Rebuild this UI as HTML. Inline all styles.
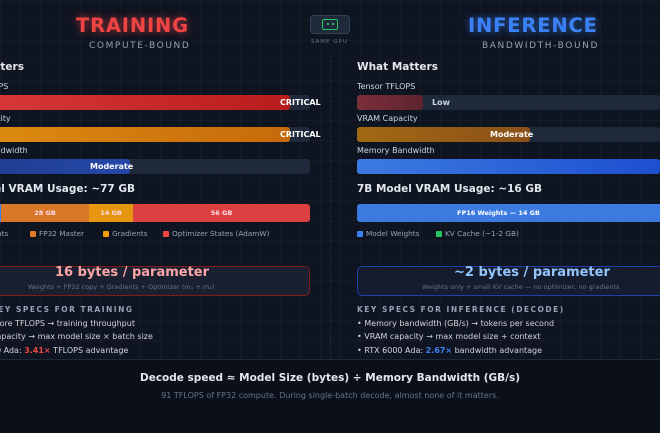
<!DOCTYPE html>
<html><head><meta charset="utf-8"><style>
*{margin:0;padding:0;box-sizing:border-box}
html,body{width:660px;height:433px;overflow:hidden}
body{background:#0f1421;font-family:"DejaVu Sans","Liberation Sans",sans-serif;color:#e2e8f0;position:relative}
.bg{position:absolute;inset:0;background-image:linear-gradient(rgba(255,255,255,.025) 1px,transparent 1px),linear-gradient(90deg,rgba(255,255,255,.025) 1px,transparent 1px);background-size:20px 20px}
.a{position:absolute;white-space:nowrap}
.h1{font-weight:bold;font-size:19.5px;letter-spacing:0.8px}
.sub{font-size:9px;letter-spacing:1.6px;color:#94a3b8}
.sec{font-weight:bold;font-size:10.5px;color:#e5e7eb}
.lbl{font-size:8px;color:#cbd5e1}
.track{position:absolute;height:15px;background:#1e293b;border-radius:3px}
.fill{position:absolute;top:0;left:0;height:15px;border-radius:3px}
.bt{position:absolute;font-size:8px;font-weight:bold;color:#fff;top:3px}
.leg{font-size:7.3px;color:#94a3b8}
.sq{display:inline-block;width:6px;height:6px;border-radius:1px;vertical-align:-1px;margin-right:3px}
.bl{font-size:8px;color:#d1d5db}
.kh{font-size:7.5px;font-weight:bold;letter-spacing:1.5px;color:#94a3b8}
#wrap{position:absolute;left:0;top:0;width:660px;height:433px;overflow:hidden}
</style></head><body><div id="wrap">
<div class="bg"></div>
<div class="a" style="left:0;top:359px;width:660px;height:74px;background:#0b0f19;border-top:1px solid #1f2937"></div>
<div class="a" style="left:330px;top:55px;height:304px;border-left:1px dashed #1f2937"></div>

<div class="a h1" style="left:76px;top:14px;color:#ef4444;text-shadow:0 0 8px rgba(239,68,68,.7)">TRAINING</div>
<div class="a sub" style="left:89px;top:41px">COMPUTE-BOUND</div>
<div class="a h1" style="left:468px;top:14px;color:#3b82f6;text-shadow:0 0 8px rgba(59,130,246,.7)">INFERENCE</div>
<div class="a sub" style="left:482px;top:41px">BANDWIDTH-BOUND</div>

<div class="a" style="left:310px;top:15px;width:40px;height:19px;border:1px solid #334155;border-radius:4px;background:#1e293b"></div>
<div class="a" style="left:322px;top:19px;width:16px;height:11px;border:1.5px solid #22c55e;border-radius:2px"></div>
<div class="a" style="left:327px;top:23px;width:2px;height:2px;background:#22c55e"></div>
<div class="a" style="left:332px;top:23px;width:2px;height:2px;background:#22c55e"></div>
<div class="a" style="left:311px;top:39px;font-size:5.5px;letter-spacing:1px;color:#64748b">SAME GPU</div>

<!-- Left -->
<div class="a sec" style="left:-57px;top:61px">What Matters</div>
<div class="a lbl" style="left:-50px;top:82px">Tensor TFLOPS</div>
<div class="track" style="left:-60px;top:95px;width:370px"><div class="fill" style="width:350px;background:linear-gradient(90deg,#dc3c3c,#b91c1c)"></div></div>
<div class="bt" style="left:280px;top:98px">CRITICAL</div>
<div class="a lbl" style="left:-50px;top:114px">VRAM Capacity</div>
<div class="track" style="left:-60px;top:127px;width:370px"><div class="fill" style="width:350px;background:linear-gradient(90deg,#e09010,#c66a0c)"></div></div>
<div class="bt" style="left:280px;top:130px">CRITICAL</div>
<div class="a lbl" style="left:-50px;top:146px">Memory Bandwidth</div>
<div class="track" style="left:-60px;top:159px;width:370px"><div class="fill" style="width:190px;background:linear-gradient(90deg,#1e3a8a,#2548a8)"></div></div>
<div class="bt" style="left:90px;top:162px">Moderate</div>
<div class="a" style="left:-50px;top:183px;font-size:10.5px;font-weight:bold">7B Model VRAM Usage: ~77 GB</div>
<div class="a" style="left:-60px;top:204px;width:370px;height:18px;border-radius:3px;overflow:hidden;display:flex;font-size:6.5px;font-weight:bold;color:#fde;line-height:18px;text-align:center">
<div style="width:61px;background:#3b82f6"></div><div style="width:88px;background:#d97726">28 GB</div><div style="width:44px;background:#e6960f">14 GB</div><div style="flex:1;background:#dc4040">56 GB</div></div>
<div class="a leg" style="left:-21px;top:229px">Weights</div>
<div class="a leg" style="left:30px;top:229px"><span class="sq" style="background:#e07b24"></span>FP32 Master</div>
<div class="a leg" style="left:103px;top:229px"><span class="sq" style="background:#f59e0b"></span>Gradients</div>
<div class="a leg" style="left:163px;top:229px"><span class="sq" style="background:#ef4444"></span>Optimizer States (AdamW)</div>
<div class="a" style="left:-60px;top:266px;width:370px;height:30px;border:1px solid #7f1d1d;border-radius:5px;background:#1a2030"></div>
<div class="a" style="left:55px;top:265px;font-size:13px;font-weight:bold;color:#fca5a5">16 bytes / parameter</div>
<div class="a" style="left:28px;top:283px;font-size:6.5px;color:#64748b">Weights + FP32 copy + Gradients + Optimizer (m₁ + m₂)</div>
<div class="a kh" style="left:-9px;top:305px">KEY SPECS FOR TRAINING</div>
<div class="a bl" style="left:-6px;top:319px">Core TFLOPS → training throughput</div>
<div class="a bl" style="left:-8px;top:332px">capacity → max model size × batch size</div>
<div class="a bl" style="left:-4px;top:346px">0 Ada: <b style="color:#ef4444">3.41×</b> TFLOPS advantage</div>

<!-- Right -->
<div class="a sec" style="left:357px;top:61px">What Matters</div>
<div class="a lbl" style="left:357px;top:82px">Tensor TFLOPS</div>
<div class="track" style="left:357px;top:95px;width:303px"><div class="fill" style="width:66px;background:linear-gradient(90deg,#7a2e3a,#5e2430)"></div></div>
<div class="bt" style="left:432px;top:98px;color:#cbd5e1">Low</div>
<div class="a lbl" style="left:357px;top:114px">VRAM Capacity</div>
<div class="track" style="left:357px;top:127px;width:303px"><div class="fill" style="width:173px;background:linear-gradient(90deg,#a06a14,#8a5018)"></div></div>
<div class="bt" style="left:490px;top:130px">Moderate</div>
<div class="a lbl" style="left:357px;top:146px">Memory Bandwidth</div>
<div class="track" style="left:357px;top:159px;width:303px"><div class="fill" style="width:303px;background:linear-gradient(90deg,#3b7be0,#1d4fd0)"></div></div>
<div class="a" style="left:357px;top:183px;font-size:10.5px;font-weight:bold">7B Model VRAM Usage: ~16 GB</div>
<div class="a" style="left:357px;top:204px;width:303px;height:18px;border-radius:3px 0 0 3px;background:#3b7be0;font-size:6.5px;font-weight:bold;line-height:18px;color:#fff"><span style="margin-left:100px">FP16 Weights — 14 GB</span></div>
<div class="a leg" style="left:357px;top:229px"><span class="sq" style="background:#3b82f6"></span>Model Weights</div>
<div class="a leg" style="left:436px;top:229px"><span class="sq" style="background:#22c55e"></span>KV Cache (~1-2 GB)</div>
<div class="a" style="left:357px;top:266px;width:320px;height:30px;border:1px solid #1e40af;border-radius:5px;background:#141c2e"></div>
<div class="a" style="left:454px;top:265px;font-size:13px;font-weight:bold;color:#93c5fd">~2 bytes / parameter</div>
<div class="a" style="left:422px;top:283px;font-size:6.5px;color:#64748b">Weights only + small KV cache — no optimizer, no gradients</div>
<div class="a kh" style="left:357px;top:305px">KEY SPECS FOR INFERENCE (DECODE)</div>
<div class="a bl" style="left:357px;top:319px">• Memory bandwidth (GB/s) → tokens per second</div>
<div class="a bl" style="left:357px;top:332px">• VRAM capacity → max model size + context</div>
<div class="a bl" style="left:357px;top:346px">• RTX 6000 Ada: <b style="color:#3b82f6">2.67×</b> bandwidth advantage</div>

<div class="a" style="left:0;width:660px;top:372px;text-align:center;font-size:10.5px;font-weight:bold;color:#e5e7eb">Decode speed ≈ Model Size (bytes) ÷ Memory Bandwidth (GB/s)</div>
<div class="a" style="left:0;width:660px;top:391px;text-align:center;font-size:8px;color:#64748b">91 TFLOPS of FP32 compute. During single-batch decode, almost none of it matters.</div>
</div></body></html>
